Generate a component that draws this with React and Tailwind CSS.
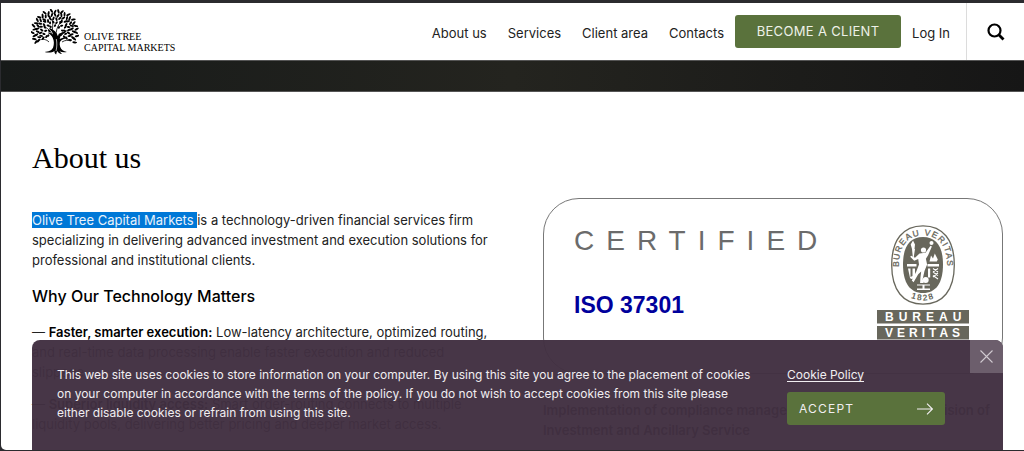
import { Fragment } from "react";

const NAV = ["About us", "Services", "Client area", "Contacts"];

const RINGS = [
  { r: 22, n: 27, len: 3.1 },
  { r: 18.2, n: 25, len: 2.8 },
  { r: 14.4, n: 20, len: 2.5 },
  { r: 10.6, n: 14, len: 2.1 },
  { r: 6.8, n: 7, len: 1.8 },
];

const LEAVES = RINGS.flatMap((ring, k) =>
  Array.from({ length: ring.n }, (_, i) => {
    const t = i / (ring.n - 1);
    const a = Math.PI * (0.84 + t * 1.32);
    const wobble = Math.sin(i * 2.7 + k * 1.9);
    const r = ring.r + wobble * 1.1;
    return {
      x: 24 + Math.cos(a) * r * 0.98,
      y: 23 + Math.sin(a) * r * 0.94,
      rot: (a * 180) / Math.PI + (i % 2 ? 28 : -24),
      len: ring.len,
    };
  })
);

function TreeLogo() {
  return (
    <svg viewBox="0 0 48 46" className="h-[46px] w-12 shrink-0" aria-hidden="true">
      {LEAVES.map((l, i) => (
        <ellipse
          key={i}
          cx={l.x}
          cy={l.y}
          rx={l.len * 0.78}
          ry="1"
          transform={`rotate(${l.rot} ${l.x} ${l.y})`}
        />
      ))}
      <path d="M13.500 43c4-.6 7.200-1.500 8.600-4.600 1.200-3 1-6.600-.3-9.400-1-2-1.900-3.300-4.600-4.700l.4-1c1.800.6 3.200 1.200 4.500 2.400-.6-2.800-1.600-4.300-4-5.800l.7-1c4.200 1.600 7 4.300 8 8.200 1.400-2.700 3.700-4.500 7.700-4.700l.2 1c-3.600.9-5.600 3.300-6 6.600 2.100-1.300 4.200-1.900 7.100-1.500l-.1 1c-3 .2-5.400 1.400-6.800 3.500-.7 3.400.5 6.800 2.700 8.300 1.100.7 2.600 1.100 4.300 1.600-2.600.6-5.200.4-7.400-.7l2.500 2.900c-2.300-.4-4-1.600-4.900-3.200l-1 3.600c-1.300-.9-1.800-2-1.700-3.500-2.200 1.600-5.900 1.900-9.900 1z" />
      <path
        d="M22 28c-1.500-5-4-8-8-10M25 27c0-5 1-9 4-13M30 27c3-4 6-6 10-7M18 33c-3-3-6-3-10-2M31 33c3-2 6-2 9-1M21 22c1-4 1-8 0-12"
        fill="none"
        stroke="black"
        strokeWidth="0.800"
      />
      <path d="M25.300 30c.8 4 .7 8-.3 12" fill="none" stroke="white" strokeWidth="0.700" />
    </svg>
  );
}

function SearchIcon() {
  return (
    <svg viewBox="0 0 18 18" className="size-[18px]" fill="none" stroke="black" aria-hidden="true">
      <circle cx="7.500" cy="7.500" r="6" strokeWidth="2.200" />
      <path d="M11.800 11.800l4.700 4.700" strokeWidth="2.800" />
    </svg>
  );
}

function BureauVeritasLogo() {
  return (
    <svg viewBox="0 0 92 115" className="h-[115px] w-[92px] shrink-0" role="img" aria-label="Bureau Veritas 1828">
      <defs>
        <path id="crest-arc" d="M23.500 56C21 46 21.500 32 24.500 24.500C28.500 15 36 10.500 46 10.500S63.500 15 67.500 24.500C70.500 32 71 46 68.500 56" />
        <path id="crest-base" d="M28 70Q46 81 64 70" />
      </defs>
      <path
        d="M46 .8C66 .8 77.300 15 77.300 40S66 79.200 46 79.200 14.700 65 14.700 40 26 .8 46 .8z"
        fill="white"
        stroke="#68675c"
        strokeWidth="1.300"
      />
      <path d="M46 12C59 12 66 21 66 39.500S59 68 46 68 26 58 26 39.500 33 12 46 12z" fill="#68675c" />
      <g fill="#68675c" fontFamily="'Liberation Sans', Arial, sans-serif" fontWeight="700">
        <text fontSize="8.500" fontWeight="400" stroke="#68675c" strokeWidth="0.300">
          <textPath href="#crest-arc" startOffset="50%" textAnchor="middle" letterSpacing="1.200">
            BUREAU VERITAS
          </textPath>
        </text>
        <text fontSize="8.500">
          <textPath href="#crest-base" startOffset="50%" textAnchor="middle" letterSpacing="1.500">
            1828
          </textPath>
        </text>
      </g>
      <g fill="white">
        <circle cx="46.500" cy="25" r="2.600" />
        <path d="M42.500 28.500l6-.8 5-7 1.400.9-3.800 8.600-2.200 3.600 1.200 5.800-2.600 6.400-1.800 8 1 4h-3.600l.3-5 .8-6.600-3 2.800-4.600 8-1.800-1.600 4.600-9.400 2.600-6.600-.8-5.600-4 1.800-4-4 1-1 3.800 2z" />
        <circle cx="54.500" cy="18" r="2" />
        <path d="M33.700 19.500l2.300-4 2 4-.5 4.500H38l-1.200 8h-1L35 24z" />
        <path d="M30 39h9.500v2.400H30zM50.500 39H62v2.400H50.500z" />
        <path d="M31 43.500h2.500v8.500l2-1v-7.500H38v7.500c-.8 3-3.500 4-5 2zM51 43.500h2.200v9H51z" />
        <path d="M52.500 36.500l1.500-6 2 3 1.800-5 3 6-1 2z" />
        <circle cx="48.700" cy="55" r="3" />
        <path d="M40 59.500h13v1.100h-5.500v3H53V65H40v-1.400h5.500v-3H40z" />
      </g>
      <path
        d="M56 43.500l5 3.500M56 47l5 3.500M56 50.500l5 3.500M61 43.500l-5 3.500M61 48l-5 4"
        fill="none"
        stroke="white"
        strokeWidth="1.100"
      />
      <rect y="85" width="92" height="13.500" fill="#68675c" />
      <rect y="101" width="92" height="13.500" fill="#68675c" />
      <g fill="white" fontFamily="'Liberation Sans', Arial, sans-serif" fontSize="12" fontWeight="700">
        <text x="8" y="96" letterSpacing="5">BUREAU</text>
        <text x="8" y="112" letterSpacing="4">VERITAS</text>
      </g>
    </svg>
  );
}

function Lines({ items }) {
  return items.map((line, i) => (
    <Fragment key={line}>
      {i > 0 && <br />}
      {line}
    </Fragment>
  ));
}

function Header() {
  return (
    <header className="flex h-[57px] shrink-0 items-stretch justify-between bg-white pl-[30px] text-[13px] text-[#222]">
      <a href="#home" className="flex items-center gap-[5px] font-['Liberation_Serif',serif] text-[10px] leading-[11px] text-black">
        <TreeLogo />
        <span className="pt-5">
          OLIVE TREE
          <br />
          CAPITAL MARKETS
        </span>
      </a>
      <div className="flex items-center">
        <nav className="flex gap-[21px] pt-1">
          {NAV.map((item) => (
            <a key={item} href="#nav">{item}</a>
          ))}
        </nav>
        <button type="button" className="ml-[11px] h-[33px] w-[166px] rounded-[3px] bg-[#5a723c] text-[13px] tracking-wide text-[#eef1e8]">
          BECOME A CLIENT
        </button>
        <a href="#login" className="ml-[11px] pt-1">Log In</a>
        <button
          type="button"
          aria-label="Search"
          className="ml-4 flex w-[58px] items-center justify-center self-stretch border-l border-[#dcdcdc]"
        >
          <SearchIcon />
        </button>
      </div>
    </header>
  );
}

function CookieBanner() {
  return (
    <aside className="absolute right-[21px] bottom-px left-8 flex h-[110px] gap-6 overflow-hidden rounded-t-[8px] bg-[#412f41]/97 pl-[25px] text-[12px] text-[#f1eef1]">
      <p className="w-[706px] shrink-0 pt-[25px] leading-[19px] whitespace-nowrap">
        <Lines
          items={[
            "This web site uses cookies to store information on your computer. By using this site you agree to the placement of cookies",
            "on your computer in accordance with the terms of the policy. If you do not wish to accept cookies from this site please",
            "either disable cookies or refrain from using this site.",
          ]}
        />
      </p>
      <div className="flex w-[158px] shrink-0 flex-col items-start gap-2 pt-[26px]">
        <a href="#policy" className="leading-[18px] underline underline-offset-2">Cookie Policy</a>
        <button type="button" className="flex h-[33px] w-full items-center justify-between rounded-[3px] bg-[#5a723c] px-3 tracking-widest">
          ACCEPT
          <svg viewBox="0 0 16 12" className="h-3 w-4" fill="none" stroke="currentColor" strokeWidth="1.100" aria-hidden="true">
            <path d="M0 6h15.300M10 .6L15.400 6 10 11.400" />
          </svg>
        </button>
      </div>
      <button
        type="button"
        aria-label="Close"
        className="absolute top-0 right-0 flex size-[33px] items-center justify-center bg-[#6c5e6c] text-[#cfc8cf]"
      >
        <svg viewBox="0 0 13 13" className="size-[13px]" fill="none" stroke="currentColor" strokeWidth="1.100" aria-hidden="true">
          <path d="M.5.5l12 12M12.500.5l-12 12" />
        </svg>
      </button>
    </aside>
  );
}

export default function App() {
  return (
    <div className="h-screen overflow-hidden bg-[#2b2b2f] pt-[3px] pb-px pl-px font-['Inter','Liberation_Sans',sans-serif]">
      <div className="flex h-full flex-col overflow-hidden rounded-bl-[5px] bg-white">
        <Header />
        <div className="h-8 shrink-0 border-y border-[#555] bg-linear-to-r from-[#171a19] via-[#24241f] to-[#161616]" />
        <main className="pr-[21px] pl-[31px]">
          <h1 className="pt-12 font-['Liberation_Serif',serif] text-[30px] leading-9 text-black">About us</h1>
          <div className="grid grid-cols-[1fr_460px] gap-8 pt-[22px]">
            <section className="pt-3 text-[13px] leading-5 whitespace-nowrap text-[#222]">
              <p>
                <mark className="bg-[#0078d7] text-[#e8f2fb]">Olive Tree Capital Markets </mark>
                <Lines
                  items={[
                    "is a technology-driven financial services firm",
                    "specializing in delivering advanced investment and execution solutions for",
                    "professional and institutional clients.",
                  ]}
                />
              </p>
              <h2 className="pt-4 text-[16px] leading-5 font-medium text-black">Why Our Technology Matters</h2>
              <ul className="flex flex-col gap-3 pt-4">
                <li>
                  — <strong className="font-semibold text-black">Faster, smarter execution:</strong>{" "}
                  <Lines
                    items={[
                      "Low-latency architecture, optimized routing,",
                      "and real-time data processing enable faster execution and reduced",
                      "slippage.",
                    ]}
                  />
                </li>
                <li>
                  — <strong className="font-semibold text-black">Superior liquidity access:</strong>{" "}
                  <Lines
                    items={[
                      "Smart order-routing connects to multiple",
                      "liquidity pools, delivering better pricing and deeper market access.",
                    ]}
                  />
                </li>
              </ul>
            </section>
            <section>
              <div className="flex h-[176px] items-start justify-between rounded-[36px] border border-[#777] pt-[26px] pr-[33px] pl-[30px] font-['Liberation_Sans',Arial,sans-serif]">
                <div>
                  <p className="text-[28px] leading-8 tracking-[12px] text-[#6b6b6b]">CERTIFIED</p>
                  <p className="pt-8 text-[23px] leading-8 font-bold text-[#00009c]">ISO 37301</p>
                </div>
                <BureauVeritasLogo />
              </div>
              <p className="pt-[26px] text-[13px] leading-5 font-semibold whitespace-nowrap text-[#222]">
                <Lines
                  items={[
                    "Implementation of compliance management system for the provision of",
                    "Investment and Ancillary Service",
                  ]}
                />
              </p>
            </section>
          </div>
        </main>
      </div>
      <CookieBanner />
    </div>
  );
}
